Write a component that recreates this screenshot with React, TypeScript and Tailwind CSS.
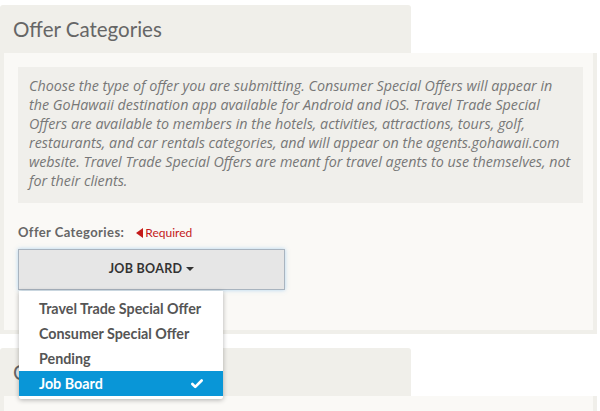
import { Check } from "lucide-react";

const OPTIONS = [
  "Travel Trade Special Offer",
  "Consumer Special Offer",
  "Pending",
  "Job Board",
];

const SELECTED = "Job Board";

function Tab({ title }: { title: string }) {
  return (
    <div className="flex h-[48px] w-[411px] items-center rounded-t-[3px] bg-[#f0efea] pl-[13px]">
      <h2 className="text-[20.5px] leading-none text-[#666666]">{title}</h2>
    </div>
  );
}

function Dropdown() {
  return (
    <ul className="absolute left-[19px] top-[291px] z-10 w-[204px] rounded-b-[2px] bg-white pb-[3px] pt-[5px] shadow-[0_1px_5px_rgba(0,0,0,0.3)]">
      {OPTIONS.map((opt) => {
        const active = opt === SELECTED;
        return (
          <li
            key={opt}
            className={`flex h-[25px] items-center justify-between whitespace-nowrap pl-[20px] pr-[19px] text-[14.3px] font-bold ${
              active ? "bg-[#0996d7] text-white" : "text-[#555555]"
            }`}
          >
            <span>{opt}</span>
            {active && <Check className="size-[14px]" strokeWidth={4.5} />}
          </li>
        );
      })}
    </ul>
  );
}

export default function App() {
  return (
    <div
      className="relative h-[411px] w-[600px] overflow-hidden bg-white pt-[5px]"
      style={{ fontFamily: "Lato, 'Open Sans', sans-serif" }}
    >
      <Tab title="Offer Categories" />
      <section className="h-[281px] w-[597px] border-[4px] border-t-0 border-[#f0efea] bg-[#faf9f6] pl-[14px] pr-[10px] pt-[14px]">
        <p
          className="h-[136px] whitespace-nowrap bg-[#f0efeb] px-[11px] pt-[9px] text-[14.3px] italic leading-[19px] text-[#777777]"
          style={{ fontFamily: "'Open Sans', sans-serif" }}
        >
          Choose the type of offer you are submitting. Consumer Special Offers will appear in
          <br />
          the GoHawaii destination app available for Android and iOS. Travel Trade Special
          <br />
          Offers are available to members in the hotels, activities, attractions, tours, golf,
          <br />
          restaurants, and car rentals categories, and will appear on the agents.gohawaii.com
          <br />
          website. Travel Trade Special Offers are meant for travel agents to use themselves, not
          <br />
          for their clients.
        </p>
        <div className="mt-[20px] flex items-center gap-[12px]">
          <span className="text-[13px] font-bold tracking-[0.4px] text-[#666666]">Offer Categories:</span>
          <span className="flex items-center text-[12px] text-[#c41a1a]">
            <span className="mr-[2px] h-0 w-0 border-y-[5px] border-r-[7px] border-y-transparent border-r-[#c41a1a]" />
            Required
          </span>
        </div>
        <button className="mt-[6px] flex h-[41px] w-[267px] items-center justify-center border border-[#a9b4bf] bg-[#e6e6e6] text-[12.5px] font-bold tracking-[0.3px] text-[#333333] shadow-[0_0_4px_rgba(102,175,233,0.5)]">
          JOB BOARD
          <span className="ml-[4px] h-0 w-0 border-x-[4px] border-t-[4px] border-x-transparent border-t-[#333333]" />
        </button>
      </section>
      <div className="h-[14px]" />
      <Tab title="Offer Details" />
      <section className="h-[40px] w-[597px] border-[4px] border-t-0 border-[#f0efea] bg-[#faf9f6]" />
      <Dropdown />
    </div>
  );
}
